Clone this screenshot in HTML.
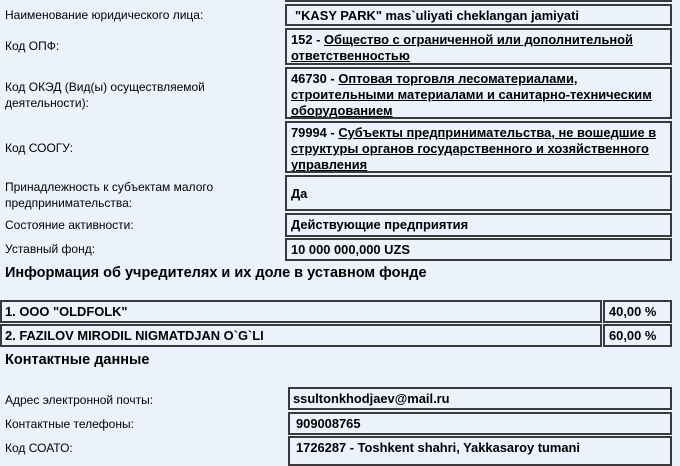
<!DOCTYPE html><html><head><meta charset="utf-8"><style>
body{margin:0;width:680px;height:453px;overflow:hidden;background:#ebf2fc;font-family:"Liberation Sans",sans-serif;font-size:12px;color:#000;position:relative}
.l{position:absolute;left:5px;line-height:16px}
.b{position:absolute;box-sizing:border-box;border:2px solid #3a3a3a;background:#ebf2fc;font-weight:bold;padding:2px 4px;line-height:16px;font-size:12.9px;white-space:nowrap;overflow:hidden}
.b u{text-decoration:underline}
h3{position:absolute;left:5px;margin:0;font-size:14.5px;font-weight:bold}
</style></head><body>
<div class="b" style="left:285px;top:-20px;width:387px;height:22px"></div>
<div class="l" style="top:7px">Наименование юридического лица:</div>
<div class="b" style="left:285px;top:4px;width:387px;height:22px;padding-left:8px">"KASY PARK" mas`uliyati cheklangan jamiyati</div>
<div class="l" style="top:38px">Код ОПФ:</div>
<div class="b" style="left:285px;top:28px;width:387px;height:37px">152 - <u>Общество с ограниченной или дополнительной</u><br><u>ответственностью</u></div>
<div class="l" style="top:79px">Код ОКЭД (Вид(ы) осуществляемой<br>деятельности):</div>
<div class="b" style="left:285px;top:67px;width:387px;height:52px">46730 - <u>Оптовая торговля лесоматериалами,</u><br><u>строительными материалами и санитарно-техническим</u><br><u>оборудованием</u></div>
<div class="l" style="top:140px">Код СООГУ:</div>
<div class="b" style="left:285px;top:121px;width:387px;height:52px">79994 - <u>Субъекты предпринимательства, не вошедшие в</u><br><u>структуры органов государственного и хозяйственного</u><br><u>управления</u></div>
<div class="l" style="top:179px">Принадлежность к субъектам малого<br>предпринимательства:</div>
<div class="b" style="left:285px;top:175px;width:387px;height:36px;padding-top:9px">Да</div>
<div class="l" style="top:217px">Состояние активности:</div>
<div class="b" style="left:285px;top:213px;width:387px;height:24px">Действующие предприятия</div>
<div class="l" style="top:241px">Уставный фонд:</div>
<div class="b" style="left:285px;top:238px;width:387px;height:23px">10 000 000,000 UZS</div>
<h3 style="top:265px">Информация об учредителях и их доле в уставном фонде</h3>
<div class="b" style="left:0;top:300px;width:602px;height:23px;padding-left:3px">1. OOO "OLDFOLK"</div>
<div class="b" style="left:603px;top:300px;width:69px;height:23px">40,00 %</div>
<div class="b" style="left:0;top:324px;width:602px;height:23px;padding-left:3px">2. FAZILOV MIRODIL NIGMATDJAN O`G`LI</div>
<div class="b" style="left:603px;top:324px;width:69px;height:23px">60,00 %</div>
<h3 style="top:352px">Контактные данные</h3>
<div class="l" style="top:392px">Адрес электронной почты:</div>
<div class="b" style="left:288px;top:387px;width:384px;height:23px;padding-left:3px">ssultonkhodjaev@mail.ru</div>
<div class="l" style="top:416px">Контактные телефоны:</div>
<div class="b" style="left:288px;top:412px;width:384px;height:23px;padding-left:6px">909008765</div>
<div class="l" style="top:440px">Код СОАТО:</div>
<div class="b" style="left:288px;top:436px;width:384px;height:30px;padding-left:6px">1726287 - Toshkent shahri, Yakkasaroy tumani</div>
</body></html>
